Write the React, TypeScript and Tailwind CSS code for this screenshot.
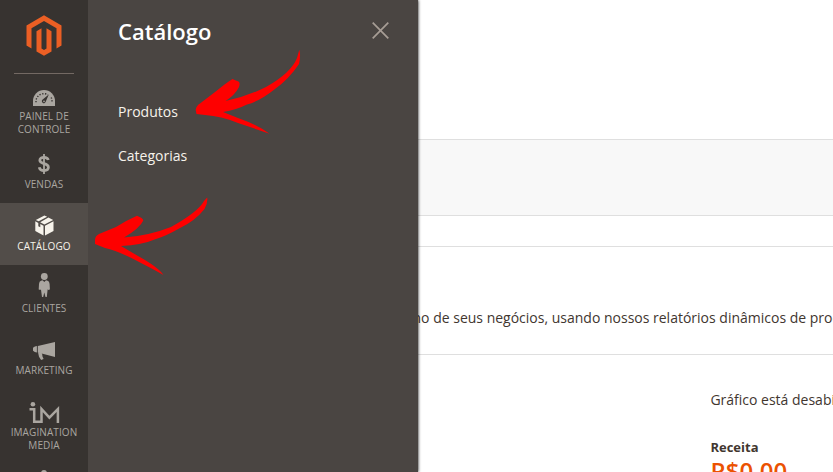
import type { ReactNode } from 'react';

type Item = { lines: string[]; icon: ReactNode; iconBox: string; active?: boolean };

const items: Item[] = [
  {
    lines: ['PAINEL DE', 'CONTROLE'],
    iconBox: 'h-[31px] pt-[11px]',
    icon: (
      <svg width="22" height="16" viewBox="0 0 22 16">
        <path d="M0 16v-5A11 11 0 0 1 22 11v5Z" fill="currentColor" />
        <path d="M3 12.2v-1.5a8 7.6 0 0 1 12-6M18.2 7.5q.9 2 .8 4.7" fill="none" stroke="#373330" strokeWidth="1.4" strokeDasharray="1.3 1.5" />
        <path d="M15.8 4.6 12.8 11.6A2 2 0 1 1 9.4 9.8Z" fill="#373330" />
        <circle cx="11" cy="11.4" r=".8" fill="currentColor" />
      </svg>
    ),
  },
  {
    lines: ['VENDAS'],
    iconBox: 'h-[37px] pt-[13px] pr-px',
    icon: (
      <svg width="12" height="20" viewBox="0 0 12 20">
        <path d="M10.3 6C9.8 4.2 8.3 3.4 6 3.4 3.4 3.4 1.8 4.5 1.8 6.3c0 4.5 8.6 2.2 8.6 7 0 2-1.7 3.3-4.4 3.3-2.6 0-4.3-1.1-4.8-3.3" fill="none" stroke="currentColor" strokeWidth="2.7" />
        <path d="M6 0v20" stroke="currentColor" strokeWidth="1.8" />
      </svg>
    ),
  },
  {
    lines: ['CATÁLOGO'],
    active: true,
    iconBox: 'h-[37px] pt-[12px]',
    icon: (
      <svg width="19" height="21" viewBox="0 0 19 21" fill="currentColor">
        <path d="m9.4.5 2.7 1.3-8.4 4.5L.8 5Zm4 1.9 4.8 2.5-8.8 4.5-4.2-2.2Z" />
        <path d="m.3 6.3 3 1.6v3.3l2 1V9l3.2 1.7v9.8L.3 16ZM18.5 6.3 10 10.7v9.8l8.5-4.6Z" />
      </svg>
    ),
  },
  {
    lines: ['CLIENTES'],
    iconBox: 'h-[37px] pt-[8px]',
    icon: (
      <svg width="12" height="25" viewBox="0 0 12 25" fill="currentColor">
        <circle cx="6.3" cy="3.5" r="3.4" />
        <path d="M3 7.8 4.5 7.3 6.3 9l1.7-1.7 1.6.5q1.8.6 2 3.2l.3 5.500-1.900.4-.3-1-.9 8.100H7.500L6.300 19.500 5.200 24H4L2.900 15.900l-.3 1-1.900-.4L1 11Q1.200 8.400 3 7.800Z" />
      </svg>
    ),
  },
  {
    lines: ['MARKETING'],
    iconBox: 'h-[37px] pt-[14px]',
    icon: (
      <svg width="22" height="20" viewBox="0 0 22 20" fill="currentColor">
        <path d="M0 6.700q1.800-1.500 3.900-1.700v6.400q-2.200-.1-3.900-1.600ZM4.800 5 22 1v15L4.800 11.600Z" />
        <path d="m5 11.300 4 1 .5 3.200 1.100 2.600-2.500.9-2.100-3.200Z" />
      </svg>
    ),
  },
  {
    lines: ['IMAGINATION', 'MEDIA'],
    iconBox: 'h-[37px] pt-[13px]',
    icon: (
      <svg width="31" height="22" viewBox="0 0 31 22">
        <circle cx="3.900" cy="2.300" r="2.300" fill="currentColor" />
        <path d="M.5 7.200h4.700v12.500h7.300V7l7.900 8.700L28.900 7v14" fill="none" stroke="currentColor" strokeWidth="2.500" />
      </svg>
    ),
  },
];

function MenuItem({ lines, icon, iconBox, active }: Item) {
  return (
    <li
      className={`h-[62px] shrink-0 text-center text-[10px] leading-[13px] tracking-[0.1px] ${
        active ? 'bg-[#524d49] text-[#f7f3eb]' : 'text-[#aaa6a0]'
      }`}
    >
      <div className={`flex justify-center ${iconBox}`}>{icon}</div>
      {lines.map((line) => (
        <div key={line}>{line}</div>
      ))}
    </li>
  );
}

export default function App() {
  return (
    <div className="relative flex h-[472px] w-[833px] overflow-hidden bg-white font-['Open_Sans','Noto_Sans',sans-serif] text-sm text-[#41362f]">
      <nav className="z-20 flex h-full w-[88px] shrink-0 flex-col overflow-hidden bg-[#373330]">
        <div className="flex h-[73px] shrink-0 justify-center pt-[15px]">
          <svg width="36" height="41" viewBox="0 0 36 41" fill="#eb5f24">
            <path d="M18 .3 35.500 10.400v20.200l-5 2.900V13.300L18 6.100 5.500 13.300v20.200l-5-2.900V10.400Z" />
            <path d="m10.500 16.200 5-2.900v20.300l2.500 1.500 2.500-1.500V13.300l5 2.900v20.200L18 40.800l-7.500-4.400Z" />
          </svg>
        </div>
        <div className="mx-[14px] h-px shrink-0 bg-[#736963]" />
        <ul className="mt-[5px] flex flex-col">
          {items.map((item) => (
            <MenuItem key={item.lines[0]} {...item} />
          ))}
          <li className="flex h-6 justify-center pt-[19px] text-[#aaa6a0]">
            <svg width="6" height="6" viewBox="0 0 6 6">
              <circle cx="3" cy="3" r="3" fill="currentColor" />
            </svg>
          </li>
        </ul>
      </nav>

      <aside className="z-10 h-full w-[330px] shrink-0 bg-[#4a4542] pr-[29px] pl-[30px] shadow-[0_0_3px_#000]">
        <header className="flex h-[62px] items-start justify-between">
          <h2 className="pt-4 text-[22px] leading-[30px] font-semibold text-white">Catálogo</h2>
          <button aria-label="Fechar" className="pt-[22px]">
            <svg width="17" height="17" viewBox="0 0 17 17">
              <path d="m.7.7 15.600 15.600M16.300.7.7 16.300" stroke="#a79d95" strokeWidth="1.700" />
            </svg>
          </button>
        </header>
        <ul className="flex flex-col gap-6 pt-10 leading-5 text-[#f7f3eb]">
          <li>Produtos</li>
          <li>Categorias</li>
        </ul>
      </aside>

      <main className="flex min-w-0 flex-1 flex-col overflow-hidden">
        <div className="h-[139px] shrink-0" />
        <div className="h-[77px] shrink-0 border-y border-[#dfdfdf] bg-[#f8f8f8]" />
        <div className="h-[31px] shrink-0 border-b border-[#dfdfdf]" />
        <div className="h-[108px] shrink-0 border-b border-[#dfdfdf] pt-[61px]">
          <p className="-ml-[5.5px] leading-5 whitespace-nowrap">
            no de seus negócios, usando nossos relatórios dinâmicos de produtos
          </p>
        </div>
        <section className="ml-[292.4px] pt-[35px] whitespace-nowrap">
          <p className="leading-5">Gráfico está desabilitado</p>
          <h3 className="mt-[28px] text-[13px] leading-[18px] font-bold">Receita</h3>
          <strong className="-mt-px block text-[24px] leading-[32px] font-semibold text-[#eb5202]">R$0,00</strong>
        </section>
      </main>

      <svg className="pointer-events-none absolute inset-0 z-30" width="833" height="472" fill="#fe0000">
        <path d="M195.700 110Q196 106 200 103.500L217 90.500Q226 83 232.500 79Q235 80 238.500 81.500Q240.500 83 239 87Q235 95 225.500 101Q246 97 266 87Q291 73 297 58L299.300 49.700Q301 56 299 64Q289 79 275 89Q260 101 247 104.500Q236 110 223 112L238 118Q258 125 269.500 133.700Q253 128 238 123Q221 116 205 115L196.500 114Z" />
        <path d="M95 240Q95 236 99 234L116 227Q127 220 137 215.700Q143 218 143.300 220.500Q140 228 124 237.500Q148 236 171 227Q198 212 204 201L207.200 197.500Q208 203 204.500 209Q195 221 180 228Q166 236 156 239Q142 245 121 246L138 256Q158 267 163.500 275Q151 268 141 263Q119 251 105 248L95 244Z" />
      </svg>
    </div>
  );
}
